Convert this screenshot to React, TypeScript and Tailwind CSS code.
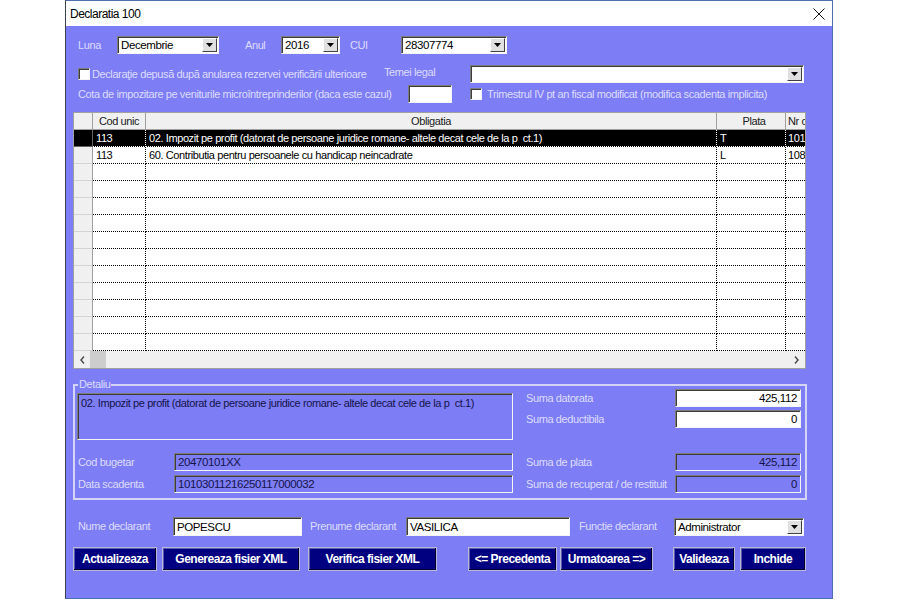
import React from "react";

// Windows-classic style form for "Declaratia 100"
const LBL = "text-[11px] leading-[13px] text-[#dcdcff] whitespace-nowrap tracking-[-0.4px]";
const SUNKEN =
  "border border-t-[#7c7c7c] border-l-[#7c7c7c] border-b-[#f4f4f4] border-r-[#f4f4f4] shadow-[inset_1px_1px_0_#3c3c3c]";
const BTN =
  "h-[24px] bg-[#000080] text-white font-bold text-[12px] tracking-[-0.5px] border border-[#b8b8d8] shadow-[inset_-1px_-1px_0_#000030,inset_1px_1px_0_#5a5ab0] flex items-center justify-center whitespace-nowrap";

function DropArrow() {
  return (
    <div className="w-[15px] h-[14px] m-[1px] shrink-0 bg-[#e0e0e0] border border-t-white border-l-white border-b-[#404040] border-r-[#404040] flex items-center justify-center">
      <svg width="7" height="4" viewBox="0 0 7 4">
        <path d="M0 0h7L3.5 4z" fill="#000" />
      </svg>
    </div>
  );
}

function Combo({ value, className }: { value?: string; className: string }) {
  return (
    <div className={`h-[18px] bg-white flex items-center shrink-0 ${SUNKEN} ${className}`}>
      <span className="flex-1 pl-[3px] text-[11.5px] leading-[14px] tracking-[-0.4px] text-black truncate">{value}</span>
      <DropArrow />
    </div>
  );
}

function CheckBox() {
  return <div className={`w-[12px] h-[12px] bg-white shrink-0 ${SUNKEN}`} />;
}

function Field({
  value,
  className,
  readOnly,
  right,
}: {
  value?: string;
  className: string;
  readOnly?: boolean;
  right?: boolean;
}) {
  return (
    <div
      className={`h-[18px] shrink-0 flex items-center px-[3px] text-[11.5px] leading-[14px] tracking-[-0.4px] ${SUNKEN} ${
        readOnly ? "bg-[#7d7df5] text-[#14144a]" : "bg-white text-black"
      } ${right ? "justify-end" : ""} ${className}`}
    >
      {value}
    </div>
  );
}

type Row = { cod: string; obl: string; plata: string; nr: string; sel?: boolean };

const rows: Row[] = [
  {
    cod: "113",
    obl: "02. Impozit pe profit (datorat de persoane juridice romane- altele decat cele de la p  ct.1)",
    plata: "T",
    nr: "101",
    sel: true,
  },
  { cod: "113", obl: "60. Contributia pentru persoanele cu handicap neincadrate", plata: "L", nr: "108" },
  ...Array.from({ length: 11 }, () => ({ cod: "", obl: "", plata: "", nr: "" })),
];

function Grid() {
  const cell = "h-full border-b border-r border-dotted leading-[16px] pl-[3px] whitespace-pre overflow-hidden";
  return (
    <div className="mt-[9px] w-[733px] border border-[#a0a0a0] bg-white text-[11px] tracking-[-0.4px]">
      <div className="flex h-[17px] bg-[#f0f0f0] border-b border-[#a0a0a0] text-[#202020] leading-[16px]">
        <div className="w-[19px] border-r border-[#a0a0a0]" />
        <div className="w-[53px] border-r border-[#a0a0a0] text-center">Cod unic</div>
        <div className="w-[571px] border-r border-[#a0a0a0] text-center">Obligatia</div>
        <div className="w-[69px] border-r border-[#a0a0a0] text-center pl-[6px]">Plata</div>
        <div className="w-[19px] pl-[2px] whitespace-nowrap overflow-hidden">Nr c</div>
      </div>
      {rows.map((r, i) => (
        <div key={i} className={`flex h-[17px] ${r.sel ? "bg-black text-white" : "text-black"}`}>
          <div
            className={`w-[19px] border-b border-r ${
              r.sel ? "bg-black border-[#606060]" : "bg-[#f0f0f0] border-b-[#d4d4d4] border-r-[#a0a0a0]"
            }`}
          />
          <div className={`w-[53px] ${cell} ${r.sel ? "border-white" : "border-black"}`}>{r.cod}</div>
          <div className={`w-[571px] ${cell} ${r.sel ? "border-white" : "border-black"}`}>{r.obl}</div>
          <div className={`w-[69px] ${cell} ${r.sel ? "border-white" : "border-black"}`}>{r.plata}</div>
          <div
            className={`w-[19px] h-full border-b border-dotted leading-[16px] pl-[2px] overflow-hidden whitespace-nowrap ${
              r.sel ? "border-white" : "border-black"
            }`}
          >
            {r.nr}
          </div>
        </div>
      ))}
      <div className="flex h-[17px] bg-[#f0f0f0] items-center">
        <div className="w-[16px] h-full flex items-center justify-center">
          <svg width="5" height="8" viewBox="0 0 5 8">
            <path d="M4 0.5L1 4l3 3.5" fill="none" stroke="#505050" strokeWidth="1.5" />
          </svg>
        </div>
        <div className="w-[16px] h-full bg-[#cdcdcd]" />
        <div className="flex-1" />
        <div className="w-[17px] h-full flex items-center justify-center">
          <svg width="5" height="8" viewBox="0 0 5 8">
            <path d="M1 0.5L4 4l-3 3.5" fill="none" stroke="#505050" strokeWidth="1.5" />
          </svg>
        </div>
      </div>
    </div>
  );
}

export default function App() {
  return (
    <div className="w-[900px] h-[600px] bg-white overflow-hidden font-['Liberation_Sans',Arial,sans-serif]">
      <div className="ml-[65px] w-[768px] border border-[#4f6fb0] border-l-[#3a4256] flex flex-col">
        {/* title bar */}
        <div className="h-[25px] bg-white flex items-center justify-between pl-[4px] pr-[7px]">
          <span className="text-[12px] tracking-[-0.5px] text-black">Declaratia 100</span>
          <svg width="12" height="12" viewBox="0 0 12 12">
            <path d="M0.5 0.5l11 11M11.5 0.5l-11 11" stroke="#111" strokeWidth="1" />
          </svg>
        </div>

        <div className="h-[572px] bg-[#7d7df5] pl-[7px] flex flex-col">
          {/* Luna / Anul / CUI */}
          <div className="mt-[10px] h-[18px] flex items-center">
            <span className={`${LBL} ml-[5px] w-[39px]`}>Luna</span>
            <Combo value="Decembrie" className="w-[102px]" />
            <span className={`${LBL} ml-[26px] w-[36px]`}>Anul</span>
            <Combo value="2016" className="w-[59px]" />
            <span className={`${LBL} ml-[10px] w-[51px]`}>CUI</span>
            <Combo value="28307774" className="w-[106px]" />
          </div>

          <div className="mt-[11px] h-[18px] flex items-center">
            <div className="ml-[5px]">
              <CheckBox />
            </div>
            <span className={`${LBL} ml-[2px] w-[292px]`}>
              Declaraţie depusă după anularea rezervei verificării ulterioare
            </span>
            <span className={`${LBL} w-[86px] -mt-[3px]`}>Temei legal</span>
            <Combo className="w-[334px]" />
          </div>

          <div className="mt-[2px] h-[18px] flex items-center">
            <span className={`${LBL} ml-[5px] w-[330px]`}>
              Cota de impozitare pe veniturile microîntreprinderilor (daca este cazul)
            </span>
            <Field className="w-[44px]" />
            <div className="ml-[18px]">
              <CheckBox />
            </div>
            <span className={`${LBL} ml-[5px]`}>Trimestrul IV pt an fiscal modificat (modifica scadenta implicita)</span>
          </div>

          <Grid />

          {/* Detaliu */}
          <fieldset className="mt-[9px] w-[734px] border-2 border-[#d4d4f6] pb-[5px]">
            <legend className={`${LBL} ml-[3px] px-[1px]`}>Detaliu</legend>
            <div className="flex items-start">
              <div
                className={`ml-[2px] mt-[2px] w-[436px] h-[47px] bg-[#7d7df5] ${SUNKEN} pl-[3px] pt-[3px] text-[11px] leading-[13px] tracking-[-0.4px] text-[#14144a] whitespace-pre`}
              >
                02. Impozit pe profit (datorat de persoane juridice romane- altele decat cele de la p  ct.1)
              </div>
              <div className="ml-[13px] -mt-[2px] flex flex-col gap-[3px]">
                <div className="flex items-center">
                  <span className={`${LBL} w-[149px]`}>Suma datorata</span>
                  <Field value="425,112" right className="w-[126px]" />
                </div>
                <div className="flex items-center">
                  <span className={`${LBL} w-[149px]`}>Suma deductibila</span>
                  <Field value="0" right className="w-[126px]" />
                </div>
              </div>
            </div>
            <div className="mt-[13px] flex items-center">
              <span className={`${LBL} ml-[3px] w-[96px]`}>Cod bugetar</span>
              <Field value="20470101XX" readOnly className="w-[339px]" />
              <span className={`${LBL} ml-[13px] w-[149px]`}>Suma de plata</span>
              <Field value="425,112" readOnly right className="w-[126px]" />
            </div>
            <div className="mt-[4px] flex items-center">
              <span className={`${LBL} ml-[3px] w-[96px]`}>Data scadenta</span>
              <Field value="10103011216250117000032" readOnly className="w-[339px]" />
              <span className={`${LBL} ml-[13px] w-[149px]`}>Suma de recuperat / de restituit</span>
              <Field value="0" readOnly right className="w-[126px]" />
            </div>
          </fieldset>

          {/* declarant */}
          <div className="mt-[17px] h-[19px] flex items-center">
            <span className={`${LBL} ml-[5px] w-[95px]`}>Nume declarant</span>
            <Field value="POPESCU" className="w-[129px] h-[19px]" />
            <span className={`${LBL} ml-[8px] w-[96px]`}>Prenume declarant</span>
            <Field value="VASILICA" className="w-[164px] h-[19px]" />
            <span className={`${LBL} ml-[9px] w-[95px]`}>Functie declarant</span>
            <Combo value="Administrator" className="w-[130px]" />
          </div>

          {/* buttons */}
          <div className="mt-[11px] flex">
            <button className={`${BTN} w-[84px]`}>Actualizeaza</button>
            <button className={`${BTN} ml-[5px] w-[138px]`}>Genereaza fisier XML</button>
            <button className={`${BTN} ml-[8px] w-[129px]`}>Verifica fisier XML</button>
            <button className={`${BTN} ml-[31px] w-[89px]`}>&lt;= Precedenta</button>
            <button className={`${BTN} ml-[3px] w-[93px]`}>Urmatoarea =&gt;</button>
            <button className={`${BTN} ml-[20px] w-[62px]`}>Valideaza</button>
            <button className={`${BTN} ml-[5px] w-[66px]`}>Inchide</button>
          </div>
        </div>
      </div>
    </div>
  );
}
